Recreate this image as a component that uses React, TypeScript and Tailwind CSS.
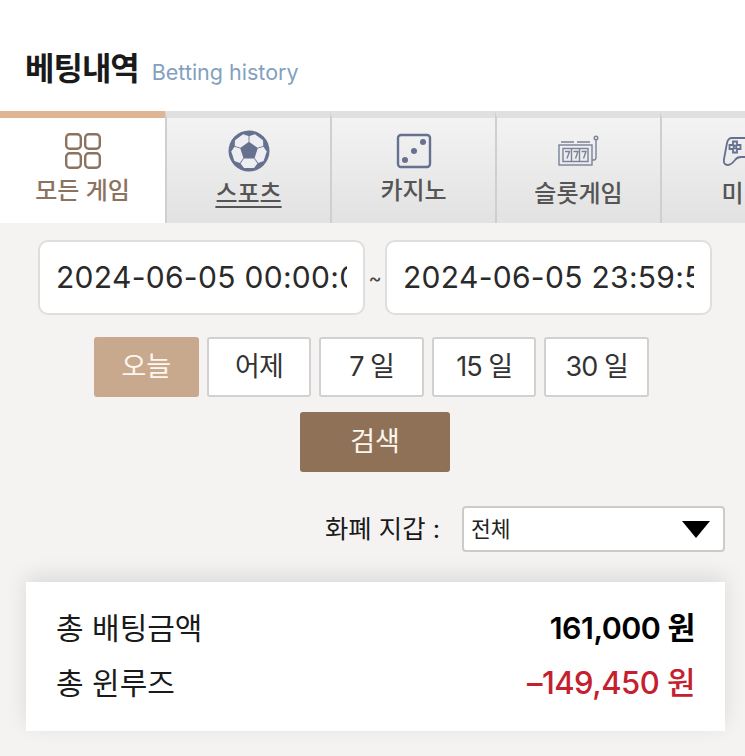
const font = "font-['Inter','Noto_Sans_CJK_KR',sans-serif]";

const GridIcon = () => (
  <svg width="36" height="36" viewBox="0 0 36 36" fill="none" stroke="#8c7360" strokeWidth="2.4">
    <rect x="1.200" y="1.200" width="14.600" height="14.600" rx="3.500" />
    <rect x="20.200" y="1.200" width="14.600" height="14.600" rx="3.500" />
    <rect x="1.200" y="20.200" width="14.600" height="14.600" rx="3.500" />
    <rect x="20.200" y="20.200" width="14.600" height="14.600" rx="3.500" />
  </svg>
);

const BallIcon = () => (
  <svg width="42" height="42" viewBox="0 0 42 42">
    <circle cx="21" cy="21" r="20.500" fill="#66708f" />
    {[36, 108, 180, 252, 324].map((angle) => (
      <path
        key={angle}
        d="M16 13.500h10l3.500-5-3.500-4.500h-10l-3.500 4.500z"
        fill="#eceef2"
        transform={`rotate(${angle} 21 21)`}
      />
    ))}
  </svg>
);

const DiceIcon = () => (
  <svg width="36" height="36" viewBox="0 0 36 36" fill="#66708f">
    <rect x="2" y="2" width="32" height="32" rx="3" fill="none" stroke="#66708f" strokeWidth="2.400" />
    <circle cx="27" cy="9" r="3" />
    <circle cx="18" cy="18" r="3" />
    <circle cx="9" cy="27" r="3" />
  </svg>
);

const SlotIcon = () => (
  <svg width="42" height="32" viewBox="0 0 42 32" fill="none" stroke="#7b8299" strokeWidth="1.400">
    <rect x="1" y="10" width="33" height="20" />
    <path d="M3 7h13M19 7h13" />
    <rect x="5" y="13.500" width="25" height="13" />
    <path d="M13.500 13.500v13M21.500 13.500v13" />
    <path d="M7 16.500h4.500l-2.500 7M15.500 16.500h4.500l-2.500 7M23.500 16.500h4.500l-2.500 7" />
    <path d="M34 25h2c2 0 2-1.500 2-3V5" />
    <circle cx="38" cy="3" r="1.800" />
  </svg>
);

const PadIcon = () => (
  <svg width="42" height="32" viewBox="0 0 42 32" fill="none" stroke="#66708f" strokeWidth="1.800">
    <path d="M9 3H33Q37 3 38 8L41 24Q42 30 37 30Q34 30 30 25Q28 22 24 22H18Q14 22 12 25Q8 30 5 30Q0 30 1 24L4 8Q5 3 9 3Z" />
    <path d="M10 6.500h4v3.500h3.500v4h-3.500v3.500h-4v-3.500h-3.500v-4h3.500z" />
    <circle cx="12" cy="12" r="1.500" />
  </svg>
);

const tabs = [
  { label: "모든 게임", icon: <GridIcon />, active: true, underline: false, labelGap: "mt-[1px]" },
  { label: "스포츠", icon: <BallIcon />, active: false, underline: true, labelGap: "mt-[4px]" },
  { label: "카지노", icon: <DiceIcon />, active: false, underline: false, labelGap: "mt-[1px]" },
  { label: "슬롯게임", icon: <SlotIcon />, active: false, underline: false, labelGap: "mt-[4px]" },
  { label: "미니", icon: <PadIcon />, active: false, underline: false, labelGap: "mt-[4px]" },
];

const ranges = ["어제", "7 일", "15 일", "30 일"];

const Tab = ({ label, icon, active, underline, labelGap }: (typeof tabs)[number]) => (
  <div
    className={`flex h-[112px] w-[165px] shrink-0 flex-col items-center border-t-[7px] pt-[12px] ${
      active
        ? "border-t-[#deb595] bg-white text-[#8c7360]"
        : "border-t-[#e0e0e0] border-l-2 border-l-[#cfcfcf] bg-gradient-to-b from-[#f3f3f3] to-[#e2e2e2] text-[#555]"
    }`}
  >
    <div className="flex h-[42px] items-center justify-center">{icon}</div>
    <span
      className={`${labelGap} whitespace-nowrap text-[24px] font-medium leading-[36px] ${
        underline ? "underline underline-offset-4" : ""
      }`}
    >
      {label}
    </span>
  </div>
);

const DateInput = ({ value }: { value: string }) => (
  <div className="flex h-[75px] w-[327px] items-center rounded-[10px] border-2 border-[#e0dedd] bg-white pl-[16px] pr-[16px]">
    <div className="w-full overflow-hidden whitespace-nowrap text-[30px] tracking-[0.3px] text-[#2a2a2a]">{value}</div>
  </div>
);

export default function App() {
  return (
    <div className={`${font} h-[756px] w-[745px] overflow-hidden bg-[#f5f3f2]`}>
      <header className="flex h-[111px] items-baseline gap-[13px] bg-white pl-[25px] pt-[47px]">
        <h1 className="text-[32px] font-bold leading-[44px] tracking-[-1px] text-[#1a1a1a]">베팅내역</h1>
        <span className="text-[21.500px] text-[#84a0c0]">Betting history</span>
      </header>

      <nav className="flex overflow-hidden">
        {tabs.map((tab) => (
          <Tab key={tab.label} {...tab} />
        ))}
      </nav>

      <div className="flex flex-col pt-[17px]">
        <div className="flex w-full items-center pl-[38px]">
          <DateInput value="2024-06-05 00:00:00" />
          <span className="w-[20px] text-center text-[20px] text-[#444]">~</span>
          <DateInput value="2024-06-05 23:59:59" />
        </div>

        <div className="ml-[94px] mt-[22px] flex gap-[8px]">
          <button className="h-[60px] w-[104.600px] rounded-[3px] bg-[#c9a98d] text-[27px] text-[#fdf6ef]">오늘</button>
          {ranges.map((range) => (
            <button
              key={range}
              className="h-[60px] w-[104.600px] rounded-[3px] border-2 border-[#d2d0d0] bg-white text-[27px] tracking-[-1px] text-[#333]"
            >
              {range}
            </button>
          ))}
        </div>

        <button className="ml-[300px] mt-[15px] h-[60px] w-[150px] rounded-[3px] bg-[#8f7157] text-[27px] text-[#fdf6ef]">
          검색
        </button>

        <div className="mt-[34px] flex w-full items-center justify-end pr-[20px]">
          <span className="mr-[22px] text-[25.400px] text-[#1a1a1a]">화폐 지갑 :</span>
          <div className="flex h-[46px] w-[263px] items-center justify-between rounded-[4px] border-2 border-[#cbcbcb] bg-white pl-[7px] pr-[13px]">
            <span className="text-[21.500px] text-[#222]">전체</span>
            <span className="h-0 w-0 border-x-[14px] border-t-[17px] border-x-transparent border-t-black" />
          </div>
        </div>

        <section className="ml-[26px] mt-[30px] w-[699px] bg-white px-[30px] pb-[20px] pt-[19px] shadow-[0_-6px_20px_rgba(0,0,0,0.1)]">
          <div className="flex h-[55px] items-center justify-between text-[30px] text-[#1a1a1a]">
            <span>총 배팅금액</span>
            <span className="text-[30.400px] font-semibold tracking-[-0.5px] text-black">161,000 원</span>
          </div>
          <div className="flex h-[55px] items-center justify-between text-[30px] text-[#1a1a1a]">
            <span>총 윈루즈</span>
            <span className="text-[31px] font-medium tracking-[-0.5px] text-[#c5202e]">–149,450 원</span>
          </div>
        </section>
      </div>
    </div>
  );
}
